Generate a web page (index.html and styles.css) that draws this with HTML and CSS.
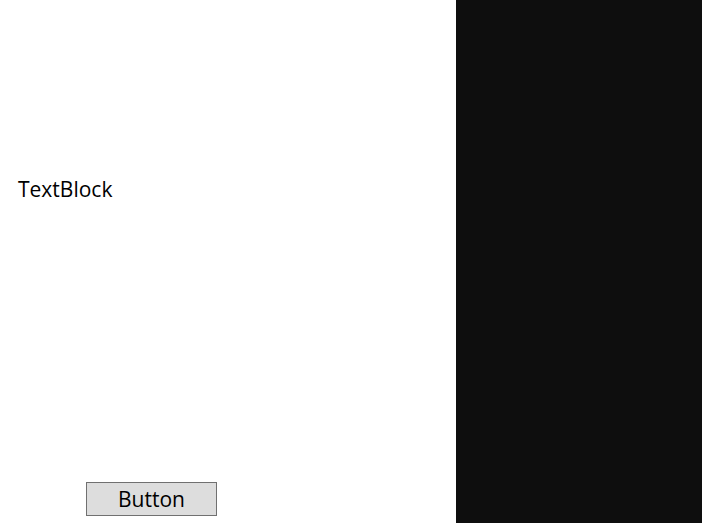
FILE: index.html
```html
<!DOCTYPE html>
<html>
<head>
<meta charset="utf-8">
<link rel="stylesheet" href="styles.css">
</head>
<body>
<div class="layout">
  <main class="left">
    <div class="text-block">TextBlock</div>
    <button class="btn">Button</button>
  </main>
  <aside class="right"></aside>
</div>
</body>
</html>
```
FILE: styles.css
```css
html, body {
  margin: 0;
  padding: 0;
  width: 702px;
  height: 523px;
  overflow: hidden;
  background: #ffffff;
}
.layout {
  display: grid;
  grid-template-columns: 456px 246px;
  height: 523px;
}
.left {
  display: flex;
  flex-direction: column;
  font-family: "Open Sans", "Noto Sans", sans-serif;
}
.text-block {
  margin: 175px 0 0 18px;
  font-size: 21px;
  line-height: 28px;
  color: #000;
}
.btn {
  margin: auto 0 7px 86px;
  width: 131px;
  height: 34px;
  box-sizing: border-box;
  border: 1px solid #707070;
  background: #dddddd;
  font-family: "Open Sans", "Noto Sans", sans-serif;
  font-size: 21px;
  line-height: 30px;
  padding: 0;
  color: #000;
  border-radius: 0;
}
.right {
  background: #0e0e0e;
}
```
